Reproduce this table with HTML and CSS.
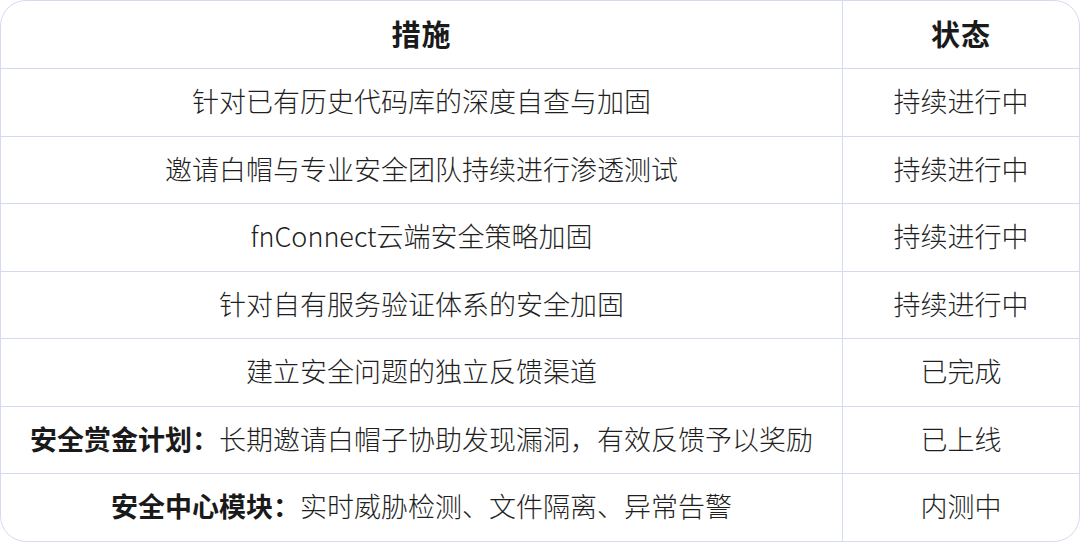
FILE: index.html
```html
<!DOCTYPE html>
<html lang="zh">
<head>
<meta charset="utf-8">
<link rel="stylesheet" href="styles.css">
</head>
<body>
<div class="wrap">
  <table class="tbl">
    <thead>
      <tr><th class="c1">措施</th><th class="c2">状态</th></tr>
    </thead>
    <tbody>
      <tr><td class="c1">针对已有历史代码库的深度自查与加固</td><td class="c2">持续进行中</td></tr>
      <tr><td class="c1">邀请白帽与专业安全团队持续进行渗透测试</td><td class="c2">持续进行中</td></tr>
      <tr><td class="c1">fnConnect云端安全策略加固</td><td class="c2">持续进行中</td></tr>
      <tr><td class="c1">针对自有服务验证体系的安全加固</td><td class="c2">持续进行中</td></tr>
      <tr><td class="c1">建立安全问题的独立反馈渠道</td><td class="c2">已完成</td></tr>
      <tr><td class="c1"><b>安全赏金计划：</b>长期邀请白帽子协助发现漏洞，有效反馈予以奖励</td><td class="c2">已上线</td></tr>
      <tr class="last"><td class="c1"><b>安全中心模块：</b>实时威胁检测、文件隔离、异常告警</td><td class="c2">内测中</td></tr>
    </tbody>
  </table>
</div>
</body>
</html>
```
FILE: styles.css
```css
html, body {
  margin: 0;
  padding: 0;
  background: #ffffff;
}
body {
  font-family: "Noto Sans CJK SC", "Noto Sans", sans-serif;
  color: #222222;
}
.wrap {
  width: 1080px;
  height: 542px;
  box-sizing: border-box;
  border: 1px solid #d6daf0;
  border-radius: 26px;
  overflow: hidden;
}
.tbl {
  width: 100%;
  border-collapse: collapse;
  table-layout: fixed;
}
.tbl th, .tbl td {
  text-align: center;
  vertical-align: middle;
  padding: 0 0 3px 0;
  border-bottom: 1px solid #d6daf0;
}
.tbl th {
  height: 64px;
  font-size: 29px;
  font-weight: 700;
  color: #1a1a1a;
  letter-spacing: 1px;
}
.tbl td {
  height: 63.5px;
  font-size: 27px;
  font-weight: 300;
  color: #1f1f1f;
}
.tbl tr.last td {
  border-bottom: none;
}
.tbl .c1 {
  width: 841px;
  border-right: 1px solid #d6daf0;
}
.tbl td b {
  font-weight: 700;
  color: #1a1a1a;
}
```
